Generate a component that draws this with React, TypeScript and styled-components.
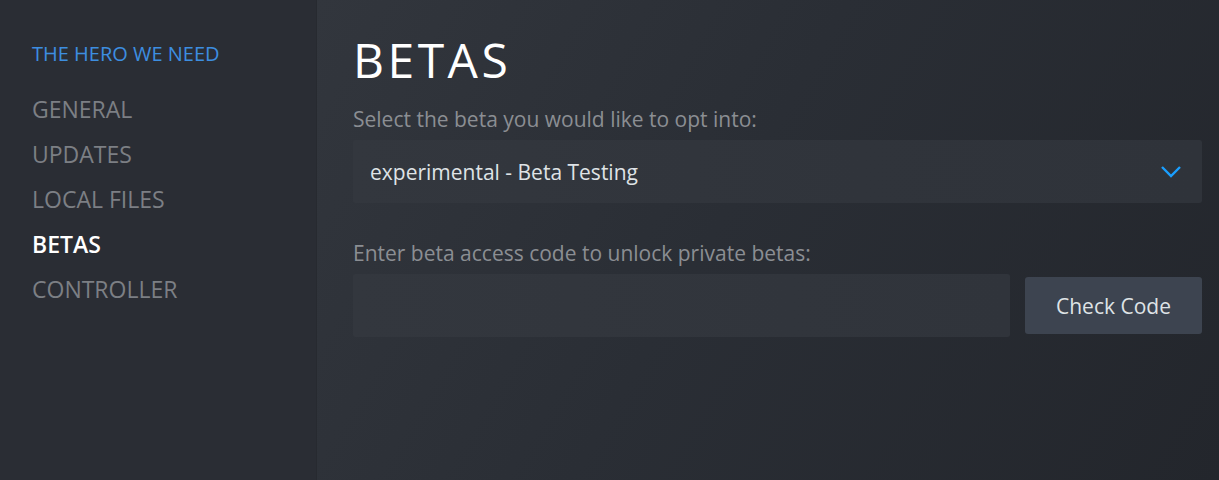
import React from "react";
import styled, { createGlobalStyle } from "styled-components";

const Global = createGlobalStyle`
  html, body { margin: 0; padding: 0; background: #2a2d34; }
  body { font-family: "Open Sans", "Noto Sans", sans-serif; }
  * { box-sizing: border-box; }
`;

const Page = styled.div`
  display: flex;
  width: 1219px;
  height: 480px;
  overflow: hidden;
`;

const Sidebar = styled.nav`
  width: 317px;
  flex-shrink: 0;
  background: #2a2d34;
  border-right: 1px solid #272a30;
  padding: 41px 0 0 32px;
  display: flex;
  flex-direction: column;
`;

const GameTitle = styled.div`
  color: #3d8ee0;
  font-size: 20px;
  line-height: 26px;
  margin-bottom: 20px;
`;

const NavItem = styled.div<{ $active?: boolean }>`
  color: ${(p) => (p.$active ? "#ffffff" : "#7c7f84")};
  font-weight: ${(p) => (p.$active ? 600 : 400)};
  font-size: 23px;
  line-height: 45px;
  height: 45px;
`;

const Main = styled.main`
  flex: 1;
  background: linear-gradient(120deg, #32363d 0%, #2a2e35 45%, #23262c 100%);
  padding: 28px 17px 0 36px;
  display: flex;
  flex-direction: column;
`;

const Title = styled.h1`
  margin: 0;
  color: #ffffff;
  font-weight: 400;
  font-size: 48px;
  letter-spacing: 3.5px;
  line-height: 64px;
`;

const Label = styled.div<{ $top: number }>`
  color: #8b8e93;
  font-size: 21px;
  line-height: 26px;
  margin-top: ${(p) => p.$top}px;
  margin-bottom: 8px;
`;

const Select = styled.div`
  height: 63px;
  border-radius: 3px;
  background: linear-gradient(90deg, #33373e 0%, #30343b 60%, #2f333a 100%);
  display: flex;
  align-items: center;
  justify-content: space-between;
  padding: 0 20px 0 17px;
  color: #dfe3e6;
  font-size: 21px;
`;

const Row = styled.div`
  display: flex;
  align-items: center;
  gap: 15px;
`;

const Input = styled.div`
  flex: 1;
  height: 63px;
  border-radius: 3px;
  background: linear-gradient(90deg, #33373e 0%, #30343b 100%);
`;

const Button = styled.button`
  width: 177px;
  height: 57px;
  border: none;
  border-radius: 3px;
  background: #3d4450;
  color: #dfe3e6;
  font-family: inherit;
  font-size: 21px;
  padding: 0;
  cursor: pointer;
`;

const Chevron = () => (
  <svg width="22" height="14" viewBox="0 0 22 14" fill="none">
    <path d="M2 2 L11 11 L20 2" stroke="#1a9fff" strokeWidth="2.4" />
  </svg>
);

export default function App() {
  return (
    <>
      <Global />
      <Page>
        <Sidebar>
          <GameTitle>THE HERO WE NEED</GameTitle>
          <NavItem>GENERAL</NavItem>
          <NavItem>UPDATES</NavItem>
          <NavItem>LOCAL FILES</NavItem>
          <NavItem $active>BETAS</NavItem>
          <NavItem>CONTROLLER</NavItem>
        </Sidebar>
        <Main>
          <Title>BETAS</Title>
          <Label $top={14}>Select the beta you would like to opt into:</Label>
          <Select>
            <span>experimental - Beta Testing</span>
            <Chevron />
          </Select>
          <Label $top={37}>Enter beta access code to unlock private betas:</Label>
          <Row>
            <Input />
            <Button>Check Code</Button>
          </Row>
        </Main>
      </Page>
    </>
  );
}
